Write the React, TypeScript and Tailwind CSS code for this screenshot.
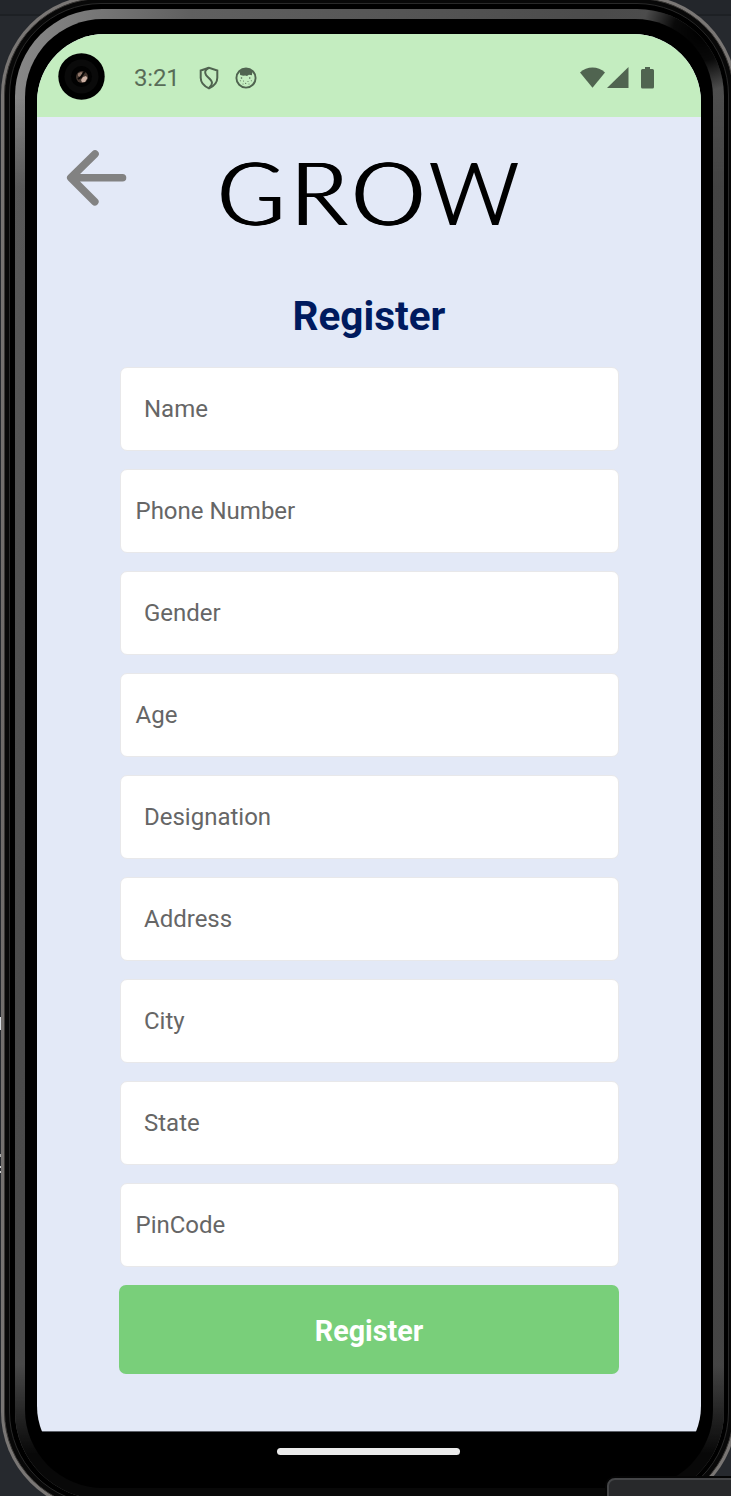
import React from "react";

type FieldSpec = { label: string; inset: boolean };

const fields: FieldSpec[] = [
  { label: "Name", inset: true },
  { label: "Phone Number", inset: false },
  { label: "Gender", inset: true },
  { label: "Age", inset: false },
  { label: "Designation", inset: true },
  { label: "Address", inset: true },
  { label: "City", inset: true },
  { label: "State", inset: true },
  { label: "PinCode", inset: false },
];

function Camera() {
  return (
    <svg className="block h-[47px] w-[47px] shrink-0" viewBox="0 0 47 47">
      <circle cx="23.5" cy="23.5" r="23.2" fill="#000" />
      <circle cx="23.5" cy="23.5" r="17" fill="#0a0a0a" />
      <circle cx="23.5" cy="23.5" r="10.5" fill="#020202" />
      <circle cx="24" cy="24" r="6" fill="#44362f" />
      <path d="M20 20.5l3-1.5 2 1-3 4-2-1z" fill="#937a6d" />
      <path d="M23 27l2-3 3-1 1.5 2-2.5 4-3 .2z" fill="#cdb1a4" />
      <path d="M27 18l-4 6-3 2" stroke="#080605" strokeWidth="2" fill="none" />
    </svg>
  );
}

function ShieldIcon() {
  return (
    <svg className="block h-6 w-5" viewBox="0 0 20 24" fill="none" stroke="#506450" strokeWidth="2">
      <path d="M10 1.800L1.700 4.500v7.200c0 4.800 3 8.200 8.300 10.600 5.300-2.400 8.300-5.800 8.300-10.600V4.500z" />
      <path d="M9.500 2C5.800 4 5.500 6.500 7 9c1.600 2.600 5.800 4.400 6 7.800.1 1.700-1 3.300-2.700 4.700" />
    </svg>
  );
}

function FaceIcon() {
  return (
    <svg className="block h-[22px] w-[22px]" viewBox="0 0 22 22">
      <circle cx="11" cy="11" r="9.600" fill="none" stroke="#506450" strokeWidth="1.900" />
      <path d="M4.500 4.200C8 .5 14 .5 17.500 4.200l-.6 4-3-.5-1.900 1.200-1.800-.4-2 .3-3-.8z" fill="#506450" />
      <g fill="#506450">
        <circle cx="6.500" cy="11" r=".8" />
        <circle cx="14.700" cy="11" r=".8" />
        <circle cx="8.500" cy="14" r=".5" />
        <circle cx="13" cy="14.500" r=".5" />
        <circle cx="10.700" cy="16.300" r=".6" />
        <circle cx="5.300" cy="13.800" r=".5" />
        <circle cx="16.300" cy="13.800" r=".5" />
        <circle cx="8" cy="17" r=".5" />
        <circle cx="14" cy="17" r=".5" />
      </g>
    </svg>
  );
}

function SystemIcons() {
  return (
    <svg className="block h-6 w-[76px]" viewBox="0 0 76 24" fill="#506450">
      <path d="M0 6.500C7-.2 18-.2 25 6.500L12.500 21.800z" />
      <path d="M48.500 1v21H27z" />
      <path d="M65 1h5v2h2.500q1.500 0 1.500 1.500v16.500q0 1.500-1.500 1.500h-10q-1.500 0-1.500-1.500V4.500Q61 3 62.500 3H65z" />
    </svg>
  );
}

function StatusBar() {
  return (
    <div className="flex h-[83px] shrink-0 items-center bg-[#c4edc0] pl-[21px] pr-[45px] pt-[5px]">
      <div className="-mt-[4px]">
        <Camera />
      </div>
      <span className="ml-[29px] w-[65px] text-[24px] leading-7 tracking-[-0.2px] text-[#596c58]">3:21</span>
      <ShieldIcon />
      <div className="ml-[16px]">
        <FaceIcon />
      </div>
      <div className="ml-auto">
        <SystemIcons />
      </div>
    </div>
  );
}

function Header() {
  return (
    <header className="flex h-[150.500px] shrink-0 pl-[29px] pt-[30.500px]">
      <svg
        className="block h-[60px] w-[62px] shrink-0"
        viewBox="0 0 62 60"
        fill="none"
        stroke="#828282"
        strokeWidth="7.600"
        strokeLinecap="round"
        strokeLinejoin="round"
      >
        <path d="M29 6L4.800 29.800l24 24M5 29.800h51.500" />
      </svg>
      <div className="ml-[88px] mt-[-8px] flex h-[104px] font-[Lato,sans-serif] text-[86px] font-light leading-[104px] text-black">
        <span className="w-[73px] origin-left scale-x-[1.06] [text-shadow:1px_0_#000,2px_0_#000,3px_0_#000]">G</span>
        <span className="w-[61px] origin-left scale-x-[1.09] [text-shadow:1px_0_#000,2px_0_#000,3px_0_#000]">R</span>
        <span className="w-[78px] origin-left scale-x-[1.08] [text-shadow:1px_0_#000,2px_0_#000,3px_0_#000]">O</span>
        <span className="w-[90px] origin-left scale-x-[1.03] [text-shadow:1px_0_#000,2px_0_#000]">W</span>
      </div>
    </header>
  );
}

function Field({ label, inset }: FieldSpec) {
  return (
    <div
      className={
        "flex h-[84px] items-center rounded-[7px] border border-[#e8e8ea] bg-white text-[24px] text-[#666666] " +
        (inset ? "pl-[23.500px]" : "pl-[15px]")
      }
    >
      {label}
    </div>
  );
}

function Screen() {
  return (
    <main className="flex h-[1440px] w-[664px] flex-col overflow-hidden rounded-[68px] bg-black">
      <div className="flex h-[1397px] shrink-0 flex-col bg-[#e3e9f7]">
        <StatusBar />
        <Header />
        <h1 className="mt-[24.500px] h-[48px] shrink-0 text-center text-[40.500px] font-bold leading-[48px] text-[#001a5e]">
          Register
        </h1>
        <div className="mx-auto mt-[27px] flex w-[499px] flex-col gap-[18px]">
          {fields.map((field) => (
            <Field key={field.label} {...field} />
          ))}
        </div>
        <button className="mx-auto mt-[18px] h-[89px] w-[500px] shrink-0 rounded-[7px] bg-[#79cf7a] pt-[4px] text-[28.700px] font-bold text-white">
          Register
        </button>
      </div>
      <div className="flex items-start justify-center border-t border-[#5c6068] pr-px pt-[16px]">
        <div className="h-[7px] w-[183px] rounded-full bg-[#ebebeb]" />
      </div>
    </main>
  );
}

function Phone() {
  return (
    <div className="-mt-[5px] ml-px h-[1517px] w-[736px] shrink-0 rounded-[100px] bg-[linear-gradient(180deg,#7a7775_0%,#6d6967_50%,#7a7775_100%)] p-[3px]">
      <div className="h-full rounded-[97px] border border-[#3a3836] bg-[#080808] p-[4px]">
        <div className="h-full rounded-[92px] border border-[#292929] bg-black p-[4.500px]">
          <div className="h-full rounded-[87px] bg-[linear-gradient(100deg,#4b4b4b_0%,#888_1%,#606060_18%,#4b4b4b_60%,#525252_100%)]">
            <div className="h-full rounded-[87px] bg-[radial-gradient(circle_at_686px_24px,#000_0px,#000000e0_28px,transparent_58px),linear-gradient(180deg,transparent_0%,transparent_6%,#3d3d3d99_12%,#3d3d3d99_91%,#080808_97%)] p-[10.500px]">
              <div className="flex h-full flex-col items-center rounded-[78px] bg-black pt-[15px]">
                <Screen />
              </div>
            </div>
          </div>
        </div>
      </div>
    </div>
  );
}

export default function App() {
  return (
    <div className="relative h-[1496px] w-[731px] overflow-hidden bg-[linear-gradient(180deg,#23262b_0px,#23262b_14px,#1d2024_14px,#1d2024_16px,#26292e_16px)] font-[Roboto,sans-serif]">
      <Phone />
      <div className="absolute left-0 top-[1017px] h-[13px] w-px bg-[#d9dde1]" />
      <div className="absolute left-0 top-[1154px] h-[3px] w-px bg-[#aaa]" />
      <div className="absolute left-0 top-[1166px] h-[2px] w-px bg-[#ccc]" />
      <div className="absolute left-0 top-[1171px] h-[2px] w-px bg-[#ccc]" />
      <div className="absolute left-[607px] top-[1478px] h-[30px] w-[140px] rounded-[8px] border-2 border-[#444547] bg-[#28292b] shadow-[0_0_0_2px_#050505]" />
    </div>
  );
}
